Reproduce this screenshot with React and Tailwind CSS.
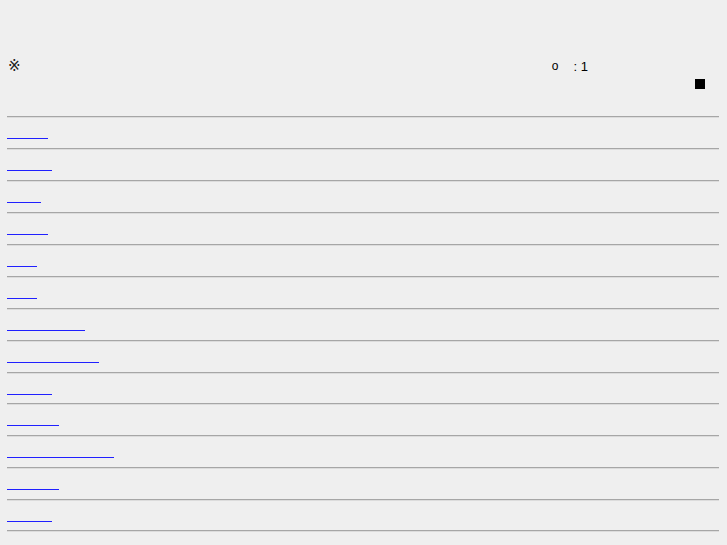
export default function App() {
  const widths = [41, 45, 34, 41, 30, 30, 78, 92, 45, 52, 107, 52, 45];
  const heights = [30, 30, 30, 30, 30, 30, 30, 30, 29, 30, 30, 30, 29];
  return (
    <div className="min-h-screen bg-[#efefef] font-['Liberation_Sans',sans-serif] text-[13px] text-black">
      <div className="pt-[58px]">
        <div className="flex h-[16px] items-center pl-[8px] pr-[139px] leading-none">
          <span className="font-['DejaVu_Sans',sans-serif] text-[15px] text-[#222]">※</span>
          <span className="ml-auto text-[12px]">o</span>
          <span className="ml-[15px] text-[13px]">:&nbsp;1</span>
        </div>
        <div className="mt-[5px] flex justify-end pr-[22px]">
          <span className="block h-[10px] w-[10px] bg-black" />
        </div>
      </div>
      <div className="mt-[27px] ml-[7px] mr-[8px]">
        {widths.map((w, i) => (
          <div key={i}>
            <div className="h-[2px] border-t border-b border-t-[#a6a6a6] border-b-[#dcdcdc]" />
            <div className="pt-[7px]" style={{ height: heights[i] }}>
              <a
                href="#"
                className="block h-[14px] border-b border-b-[#2020ff] text-[#2020ff]"
                style={{ width: w }}
              >
                {"\u00a0"}
              </a>
            </div>
          </div>
        ))}
        <div className="h-[2px] border-t border-b border-t-[#a6a6a6] border-b-[#dcdcdc]" />
      </div>
    </div>
  );
}
